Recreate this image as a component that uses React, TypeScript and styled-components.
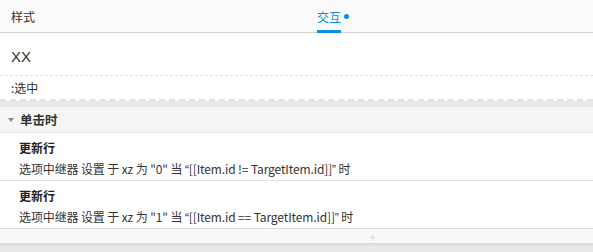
import React from "react";
import styled, { createGlobalStyle } from "styled-components";

const Global = createGlobalStyle`
  html, body { margin: 0; padding: 0; background: #fff; }
  body { font-family: "Noto Sans CJK SC", "Noto Sans", sans-serif; color: #333; }
`;

const Page = styled.div`
  width: 593px;
  height: 252px;
  overflow: hidden;
  display: flex;
  flex-direction: column;
  background: #fff;
`;

const TabBar = styled.div`
  height: 32px;
  background: #fafafa;
  border-bottom: 1px solid #d2d2d2;
  display: grid;
  grid-template-columns: 317px 1fr;
  align-items: stretch;
`;

const Tab = styled.div<{ $active?: boolean }>`
  position: relative;
  display: flex;
  align-items: center;
  padding-left: ${(p) => (p.$active ? "0" : "11px")};
  font-size: 12px;
  color: ${(p) => (p.$active ? "#0d8ee0" : "#333")};
`;

const TabLabel = styled.span<{ $active?: boolean }>`
  position: relative;
  height: 100%;
  display: flex;
  align-items: center;
  padding-top: 1px;
  ${(p) =>
    p.$active &&
    `&::after { content: ""; position: absolute; left: 0; right: 0; bottom: 0; height: 3px; background: #0d8ee0; }`}
`;

const Dot = styled.span`
  width: 5px;
  height: 5px;
  border-radius: 50%;
  background: #0d8ee0;
  margin-left: 3px;
  margin-top: 1px;
`;

const NameRow = styled.div`
  height: 43px;
  display: flex;
  align-items: center;
  padding-left: 11px;
  font-family: "Liberation Sans", "Noto Sans CJK SC", sans-serif;
  font-size: 15px;
  color: #333;
  border-bottom: 1px dashed #e0e0e0;
  box-sizing: border-box;
  padding-top: 5px;
`;

const StateRow = styled.div`
  height: 25px;
  display: flex;
  align-items: center;
  padding-left: 11px;
  font-size: 12px;
  color: #333;
  border-bottom: 2px dashed #e2e2e2;
  box-sizing: border-box;
`;

const EventBlock = styled.div`
  background: #e8e8e8;
  padding-top: 6px;
  flex: 1;
  display: flex;
  flex-direction: column;
`;

const EventHeader = styled.div`
  height: 25px;
  background: #f5f5f5;
  display: flex;
  align-items: center;
  padding-left: 8px;
  gap: 6px;
  font-size: 12.5px;
  font-weight: bold;
  color: #333;
  border-bottom: 1px solid #e6e6e6;
`;

const Caret = styled.svg`
  width: 6px;
  height: 4px;
  fill: #888;
`;

const Action = styled.div<{ $last?: boolean }>`
  background: #fff;
  padding: 6px 0 0 19px;
  height: 48px;
  box-sizing: border-box;
  border-bottom: 1px solid ${(p) => (p.$last ? "#dcdcdc" : "#e4e4e4")};
  display: flex;
  flex-direction: column;
  gap: 4px;
`;

const ActionTitle = styled.div`
  font-size: 12px;
  font-weight: bold;
  color: #222;
  line-height: 17px;
`;

const ActionDesc = styled.div`
  font-size: 12px;
  color: #333;
  line-height: 17px;
  letter-spacing: -0.12px;
`;

const Quote = styled.span`
  font-family: "Liberation Sans", sans-serif;
`;

const AddRow = styled.div`
  height: 14px;
  background: #f8f8f8;
  display: flex;
  justify-content: center;
  align-items: center;
  padding-left: 152px;
  color: #d8d8d8;
  font-size: 12px;
  box-shadow: 0 2px 2px rgba(0, 0, 0, 0.08);
`;

export default function App() {
  return (
    <Page>
      <Global />
      <TabBar>
        <Tab>
          <TabLabel>样式</TabLabel>
        </Tab>
        <Tab $active>
          <TabLabel $active>交互</TabLabel>
          <Dot />
        </Tab>
      </TabBar>
      <NameRow>XX</NameRow>
      <StateRow>:选中</StateRow>
      <EventBlock>
        <EventHeader>
          <Caret viewBox="0 0 6 4">
            <polygon points="0,0 6,0 3,4" />
          </Caret>
          单击时
        </EventHeader>
        <Action>
          <ActionTitle>更新行</ActionTitle>
          <ActionDesc>
            选项中继器 设置 于 xz 为 "0" 当 <Quote>“</Quote>[[Item.id != TargetItem.id]]<Quote>”</Quote> 时
          </ActionDesc>
        </Action>
        <Action $last>
          <ActionTitle>更新行</ActionTitle>
          <ActionDesc>
            选项中继器 设置 于 xz 为 "1" 当 <Quote>“</Quote>[[Item.id == TargetItem.id]]<Quote>”</Quote> 时
          </ActionDesc>
        </Action>
        <AddRow>+</AddRow>
      </EventBlock>
    </Page>
  );
}
